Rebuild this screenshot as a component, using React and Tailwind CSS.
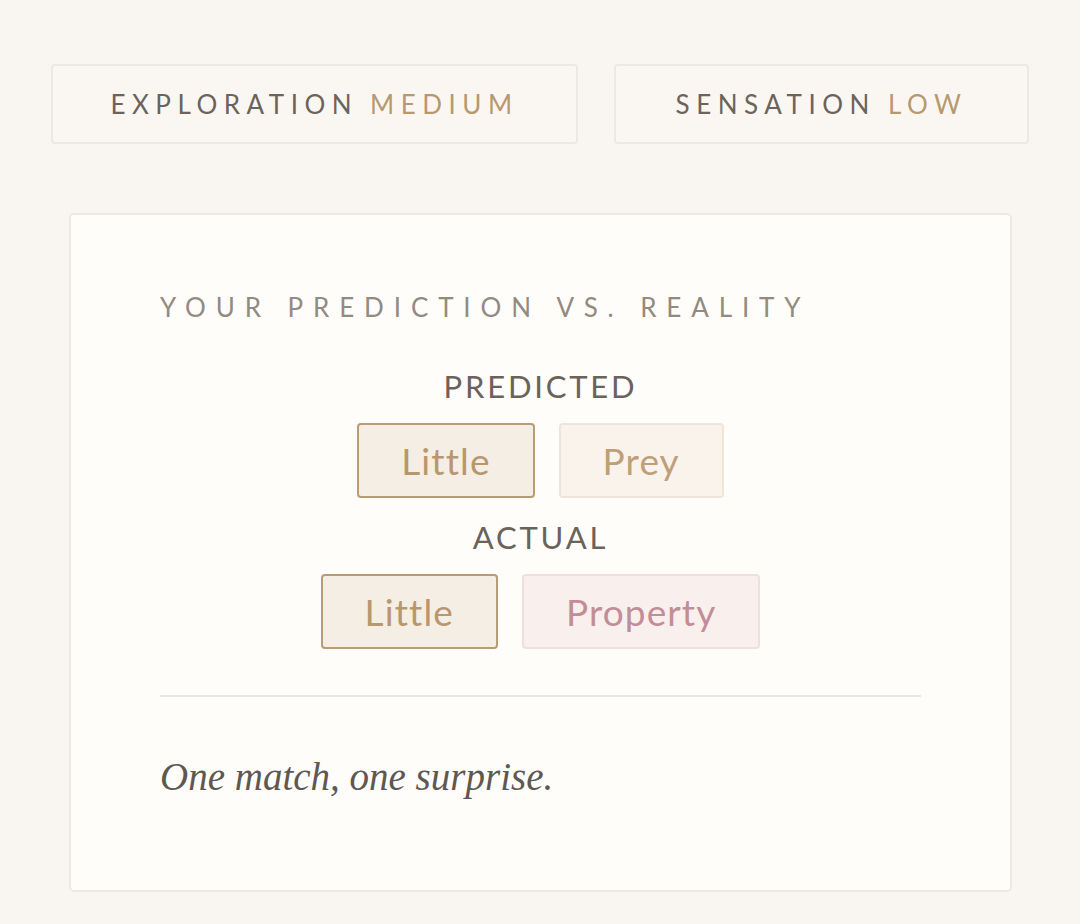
import React from "react";

const sans = { fontFamily: "Lato, 'Open Sans', sans-serif" };

function Chip({ children, variant }) {
  const styles = {
    match: "border-[#b99b76] bg-[#f5eee5] text-[#b8976f]",
    miss: "border-[#efe4d9] bg-[#f9f3ec] text-[#bf9f79]",
    surprise: "border-[#f0dfdf] bg-[#f9f0ee] text-[#c38d98]",
  };
  return (
    <div
      className={`h-[75px] flex items-center justify-center px-[42px] rounded-[4px] border-2 text-[37px] tracking-[0.03em] ${styles[variant]}`}
    >
      {children}
    </div>
  );
}

export default function App() {
  return (
    <div className="min-h-screen bg-[#f9f6f2] pb-[32px]" style={sans}>
      <div className="flex gap-[36px] px-[51px] pt-[64px]">
        <div className="w-[527px] h-[80px] flex items-center justify-center border-2 border-[#ece8e3] rounded-[4px] bg-[#faf7f3] text-[26px] tracking-[0.25em] text-[#6b635c]">
          <span>EXPLORATION</span>
          <span className="ml-[12px] text-[#b8986f]">MEDIUM</span>
        </div>
        <div className="flex-1 h-[80px] flex items-center justify-center border-2 border-[#ece8e3] rounded-[4px] bg-[#faf7f3] text-[26px] tracking-[0.25em] text-[#6b635c]">
          <span>SENSATION</span>
          <span className="ml-[12px] text-[#b8986f]">LOW</span>
        </div>
      </div>

      <div className="ml-[69px] mr-[68px] mt-[69px] h-[679px] border-2 border-[#ece8e3] rounded-[5px] bg-[#fefdfa] px-[89px] pt-[76px]">
        <div className="text-[26px] leading-[32px] tracking-[0.38em] text-[#938a80] whitespace-nowrap">
          YOUR PREDICTION VS. REALITY
        </div>

        <div className="flex flex-col items-center mt-[45px]">
          <div className="text-[31px] leading-[36px] tracking-[0.09em] text-[#6b625a]">
            PREDICTED
          </div>
          <div className="flex gap-[24px] mt-[19px]">
            <Chip variant="match">Little</Chip>
            <Chip variant="miss">Prey</Chip>
          </div>
          <div className="text-[31px] leading-[36px] tracking-[0.09em] text-[#6b625a] mt-[21px]">
            ACTUAL
          </div>
          <div className="flex gap-[24px] mt-[19px]">
            <Chip variant="match">Little</Chip>
            <Chip variant="surprise">Property</Chip>
          </div>
        </div>

        <div className="h-[2px] bg-[#ebe7e2] mt-[46px]" />

        <div
          className="mt-[56px] text-[39px] leading-[48px] italic text-[#5e5852]"
          style={{ fontFamily: "'Liberation Serif', 'DejaVu Serif', serif" }}
        >
          One match, one surprise.
        </div>
      </div>
    </div>
  );
}
